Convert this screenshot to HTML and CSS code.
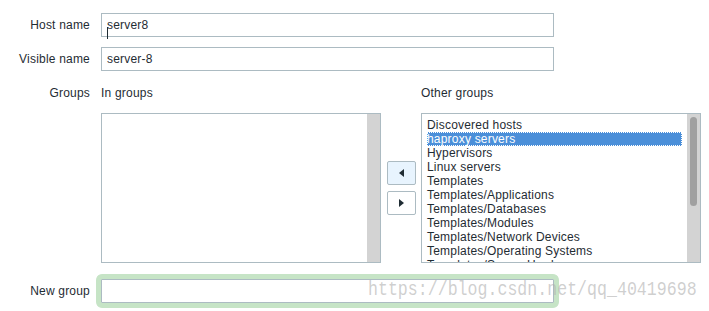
FILE: index.html
```html
<!DOCTYPE html>
<html>
<head>
<meta charset="utf-8">
<link rel="stylesheet" href="styles.css">
</head>
<body>
<div class="form">
  <div class="label row-input">Host name</div>
  <div class="field row-input">
    <div class="input">server8</div>
    <span class="ibeam"></span>
  </div>

  <div class="label row-input row-2">Visible name</div>
  <div class="field row-input row-2">
    <div class="input">server-8</div>
  </div>

  <div class="label row-groups">Groups</div>
  <div class="groups row-groups">
    <div class="gcol">
      <div class="ghead">In groups</div>
      <div class="listbox">
        <div class="items"></div>
        <div class="track"></div>
      </div>
    </div>
    <div class="mid">
      <button class="mv mv-active"><span class="tri-left"></span></button>
      <button class="mv"><span class="tri-right"></span></button>
    </div>
    <div class="gcol">
      <div class="ghead">Other groups</div>
      <div class="listbox">
        <div class="items">
          <div class="item">Discovered hosts</div>
          <div class="item selected">haproxy servers</div>
          <div class="item">Hypervisors</div>
          <div class="item">Linux servers</div>
          <div class="item">Templates</div>
          <div class="item">Templates/Applications</div>
          <div class="item">Templates/Databases</div>
          <div class="item">Templates/Modules</div>
          <div class="item">Templates/Network Devices</div>
          <div class="item">Templates/Operating Systems</div>
          <div class="item">Templates/Server Hardware</div>
          <div class="item">Templates/Virtualization</div>
        </div>
        <div class="track"><div class="thumb"></div></div>
      </div>
    </div>
  </div>

  <div class="label row-input row-new">New group</div>
  <div class="field row-input row-new">
    <div class="input focused"></div>
  </div>
</div>
<div class="watermark">https://blog.csdn.net/qq_40419698</div>
</body>
</html>
```

FILE: styles.css
```css
html, body {
  margin: 0;
  padding: 0;
  background: #ffffff;
}

body {
  font-family: "Liberation Sans", Arial, sans-serif;
  font-size: 12px;
  letter-spacing: 0.2px;
  color: #1f2c33;
  width: 709px;
  height: 311px;
  overflow: hidden;
  position: relative;
}

.form {
  display: grid;
  grid-template-columns: 90px auto;
  column-gap: 11px;
  padding-top: 13px;
}

.label {
  text-align: right;
  white-space: nowrap;
}

.row-input {
  height: 24px;
  line-height: 24px;
}

.row-2 {
  margin-top: 10px;
}

.row-groups {
  margin-top: 15px;
  line-height: 14px;
}

.row-new {
  margin-top: 16px;
}

.field {
  position: relative;
  width: 453px;
}

.input {
  box-sizing: border-box;
  width: 453px;
  height: 24px;
  border: 1px solid #acbbc2;
  padding: 0 5px;
  line-height: 22px;
  color: #1f2c33;
  background: #fff;
}

.input.focused {
  box-shadow: 0 0 0 4px #c6e4c6;
  outline: 1px solid #c6e4c6;
  outline-offset: 4px;
  border-radius: 1px;
}

.ibeam {
  position: absolute;
  left: 6px;
  top: 14px;
  width: 1px;
  height: 12px;
  background: #1f2c33;
}

.groups {
  display: flex;
  align-items: stretch;
}

.gcol {
  display: flex;
  flex-direction: column;
  width: 280px;
}

.ghead {
  height: 14px;
  line-height: 14px;
  margin-bottom: 13px;
  white-space: nowrap;
}

.listbox {
  box-sizing: border-box;
  width: 280px;
  height: 150px;
  border: 1px solid #acbbc2;
  display: flex;
  background: #fff;
}

.items {
  flex: 1;
  overflow: hidden;
  padding: 4px 5px 0 5px;
}

.item {
  height: 14px;
  line-height: 14px;
  white-space: nowrap;
  color: #1f2c33;
}

.item.selected {
  background: #4b8fd9;
  color: #ffffff;
  outline: 1px dotted #ffffff;
  outline-offset: -1px;
}

.track {
  width: 13px;
  background: #d3d3d3;
  box-sizing: border-box;
  padding: 3px 2px 0 2px;
}

.thumb {
  width: 7px;
  height: 89px;
  border-radius: 4px;
  background: #a0a0a0;
  margin-left: 1px;
}

.mid {
  width: 40px;
  padding-top: 27px;
  display: flex;
  flex-direction: column;
  justify-content: center;
  align-items: flex-start;
  gap: 6px;
}

.mv {
  box-sizing: border-box;
  width: 29px;
  height: 24px;
  margin: 0 0 0 6px;
  padding: 0;
  border: 1px solid #acbbc2;
  border-radius: 2px;
  background: #ffffff;
  display: flex;
  align-items: center;
  justify-content: center;
}

.mv-active {
  background: #e8f4fe;
}

.tri-left {
  width: 0;
  height: 0;
  border-top: 4px solid transparent;
  border-bottom: 4px solid transparent;
  border-right: 5px solid #1f2c33;
}

.tri-right {
  width: 0;
  height: 0;
  border-top: 4px solid transparent;
  border-bottom: 4px solid transparent;
  border-left: 5px solid #1f2c33;
}

.watermark {
  position: absolute;
  left: 368px;
  top: 280px;
  font-family: "Liberation Mono", "DejaVu Sans Mono", monospace;
  font-size: 16.6px;
  letter-spacing: 0;
  line-height: 20px;
  color: rgba(175, 175, 175, 0.6);
  white-space: nowrap;
  transform: scaleY(1.2);
  transform-origin: left center;
}
```
